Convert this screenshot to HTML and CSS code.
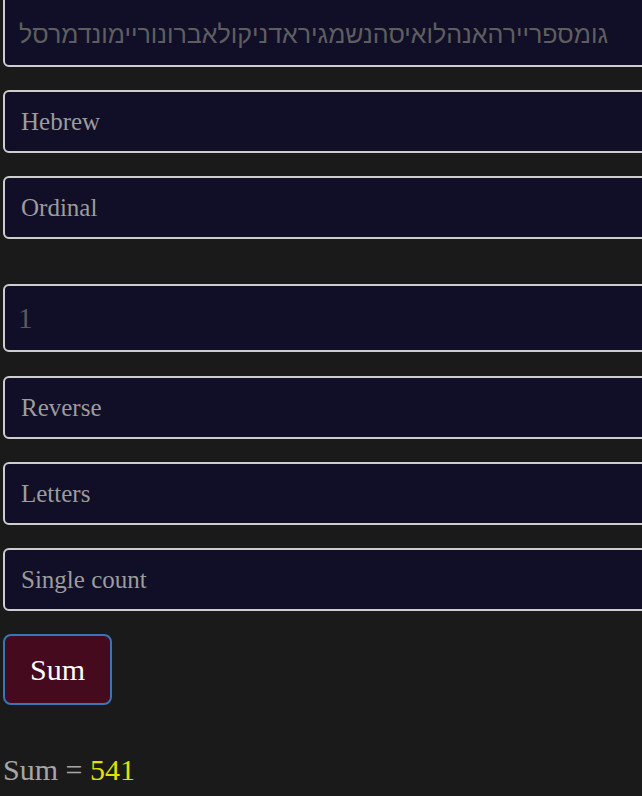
FILE: index.html
```html
<!DOCTYPE html>
<html lang="en">
<head>
<meta charset="utf-8">
<title>Gematria Sum</title>
<link rel="stylesheet" href="styles.css">
</head>
<body>
<main class="page">
  <div class="field field-text"><span class="placeholder" dir="rtl">גומספריירהאנהלואיסהנשמגיראדניקולאברונוריימונדמרסל</span></div>
  <div class="field field-select">Hebrew</div>
  <div class="field field-select">Ordinal</div>
  <div class="field field-number"><span class="dim">1</span></div>
  <div class="field field-select first-after-number">Reverse</div>
  <div class="field field-select">Letters</div>
  <div class="field field-select">Single count</div>
  <button class="sum-btn" type="button">Sum</button>
  <p class="result">Sum = <span class="value">541</span></p>
</main>
</body>
</html>
```

FILE: styles.css
```css
html, body {
  margin: 0;
  padding: 0;
  background: #1a1a1a;
  overflow: hidden;
  height: 796px;
}

.page {
  display: flex;
  flex-direction: column;
  align-items: flex-start;
  padding-left: 3px;
  font-family: "Liberation Serif", "Times New Roman", serif;
}

.field {
  box-sizing: border-box;
  width: 720px;
  height: 63px;
  border: 2px solid #cdcdcd;
  border-radius: 6px;
  background: #110e28;
  color: #9c9c9c;
  font-family: "Liberation Serif", "Times New Roman", serif;
  font-size: 25px;
  display: flex;
  align-items: center;
  padding-left: 16px;
  margin-top: 23px;
}

.field-text {
  height: 100px;
  margin-top: -33px;
  align-items: flex-end;
  padding-left: 14px;
  padding-bottom: 16px;
  font-family: "Liberation Sans", Arial, sans-serif;
  font-size: 25px;
}

.placeholder {
  color: #5e5e5e;
  white-space: nowrap;
}

.field-number {
  height: 68px;
  margin-top: 45px;
  padding-left: 13px;
  font-size: 29px;
}

.dim {
  color: #5a5a5a;
}

.first-after-number {
  margin-top: 24px;
}

.sum-btn {
  margin-top: 23px;
  box-sizing: border-box;
  width: 109px;
  height: 71px;
  border: 2px solid #3876b5;
  border-radius: 8px;
  background: #450a1e;
  color: #ffffff;
  font-family: "Liberation Serif", "Times New Roman", serif;
  font-size: 30px;
  padding: 0;
}

.result {
  margin: 48px 0 0 0;
  font-size: 30px;
  color: #a6a6a6;
  line-height: 34px;
}

.value {
  color: #e2e000;
}
```
